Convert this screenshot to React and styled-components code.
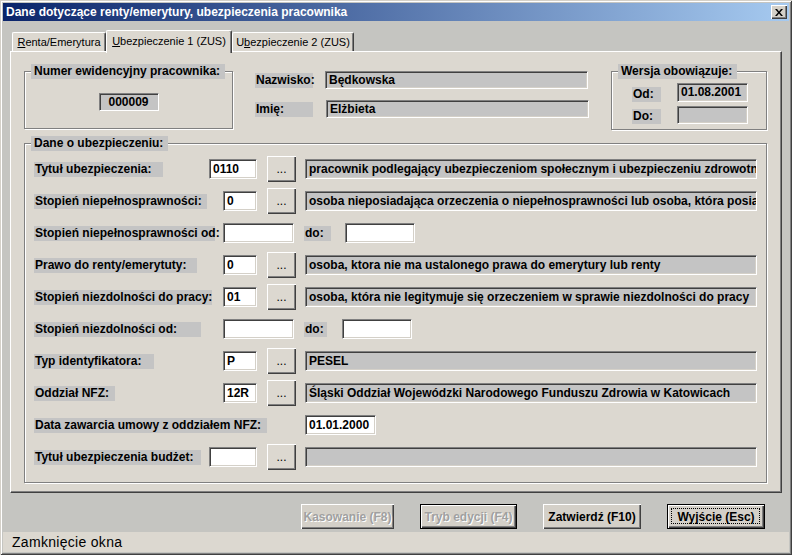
import React from 'react'
import styled, { createGlobalStyle } from 'styled-components'

const GlobalStyle = createGlobalStyle`
  html, body { margin: 0; padding: 0; background: #c5c5c1; }
  body { font-family: "Liberation Sans", Arial, sans-serif; color: #000; }
  * { box-sizing: border-box; }
`

const Window = styled.div`
  width: 792px;
  height: 555px;
  padding: 3px;
  display: flex;
  flex-direction: column;
  background: #c5c5c1;
  box-shadow: inset 1px 1px 0 #d4d0c8, inset -1px -1px 0 #404040,
    inset 2px 2px 0 #fff, inset -2px -2px 0 #808080;
`

const TitleBar = styled.div`
  height: 18px;
  display: flex;
  align-items: center;
  justify-content: space-between;
  padding: 0 2px 0 3px;
  background: linear-gradient(to right, #0a246a, #a6caf0);
`

const TitleText = styled.span`
  color: #fff;
  font-weight: bold;
  font-size: 12px;
  white-space: nowrap;
`

const CloseButton = styled.div`
  width: 16px;
  height: 14px;
  display: flex;
  align-items: center;
  justify-content: center;
  background: #d4d0c8;
  box-shadow: inset 1px 1px 0 #fff, inset -1px -1px 0 #404040, inset -2px -2px 0 #808080;
`

const Body = styled.div`
  display: flex;
  flex-direction: column;
  padding: 9px 7px 0;
`

const TabStrip = styled.div`
  height: 21px;
  display: flex;
  align-items: flex-end;
  padding-left: 2px;
  position: relative;
  z-index: 1;
`

const Tab = styled.div`
  width: ${p => p.$w}px;
  height: ${p => (p.$active ? 23 : 19)}px;
  margin-bottom: ${p => (p.$active ? -2 : 0)}px;
  display: flex;
  align-items: center;
  justify-content: center;
  padding-bottom: ${p => (p.$active ? 2 : 0)}px;
  font-size: 11px;
  background: #dcd8d0;
  border-top: 1px solid #fff;
  border-left: 1px solid #fff;
  border-right: 1px solid #404040;
  border-radius: 2px 2px 0 0;
  box-shadow: inset -1px 0 0 #808080;
  white-space: nowrap;
  u { text-decoration: underline; }
`

const Panel = styled.div`
  height: 442px;
  padding: 19px 14px 0 13px;
  background: #dcd8d0;
  border-top: 1px solid #fff;
  border-left: 1px solid #fff;
  border-right: 1px solid #404040;
  border-bottom: 1px solid #404040;
  box-shadow: inset -1px -1px 0 #808080;
`

const TopSection = styled.div`
  height: 59px;
  display: flex;
  align-items: flex-start;
  margin-bottom: 13px;
`

const GroupBox = styled.div`
  width: ${p => (p.$w ? `${p.$w}px` : 'auto')};
  height: ${p => (p.$h ? `${p.$h}px` : 'auto')};
  display: flex;
  flex-direction: column;
  border: 1px solid #808080;
  box-shadow: inset 1px 1px 0 #fff, 1px 1px 0 #fff;
`

const GroupTitle = styled.div`
  align-self: flex-start;
  margin: -8px 0 ${p => -7 + (p.$after || 0)}px ${p => p.$left}px;
  padding: 0 5px 0 3px;
  height: 15px;
  line-height: 15px;
  font-size: 12px;
  font-weight: bold;
  background: #c4c4c4;
  white-space: nowrap;
`

const NumberGroup = styled(GroupBox)`
  align-items: center;
`

const NumberValue = styled.div`
  width: 60px;
  height: 18px;
  display: flex;
  align-items: center;
  justify-content: center;
  font-size: 12px;
  font-weight: bold;
  background: #c4c4c4;
  border: 1px solid;
  border-color: #808080 #fff #fff #808080;
  box-shadow: inset 1px 1px 0 #404040;
`

const NameBlock = styled.div`
  margin-left: 22px;
  display: flex;
  flex-direction: column;
  gap: 11px;
`

const NameRow = styled.div`
  height: 18px;
  display: flex;
  align-items: center;
`

const SideLabel = styled.div`
  width: ${p => p.$w}px;
  height: 15px;
  line-height: 15px;
  margin-right: ${p => p.$gap}px;
  padding-left: 1px;
  font-size: 12px;
  font-weight: bold;
  background: #c4c4c4;
  white-space: nowrap;
  flex-shrink: 0;
`

const Field = styled.div`
  width: ${p => (p.$w ? `${p.$w}px` : 'auto')};
  flex: ${p => (p.$w ? '0 0 auto' : '1 1 0')};
  min-width: 0;
  height: ${p => p.$h || 20}px;
  line-height: ${p => (p.$h || 20) - 2}px;
  padding-left: 3px;
  font-size: 12px;
  font-weight: bold;
  white-space: nowrap;
  overflow: hidden;
  background: ${p => (p.$white ? '#fff' : '#c4c4c4')};
  border: 1px solid;
  border-color: #808080 #fff #fff #808080;
  box-shadow: inset 1px 1px 0 #404040, inset -1px -1px 0 #d4d0c8;
`

const VersionGroup = styled(GroupBox)`
  margin-left: auto;
  padding-left: 20px;
`

const VersionRows = styled.div`
  display: flex;
  flex-direction: column;
  gap: 4px;
`

const VersionRow = styled.div`
  display: flex;
  align-items: flex-end;
`

const DataGroup = styled(GroupBox)`
  padding: 0 9px 9px 9px;
`

const Row = styled.div`
  height: 32px;
  display: flex;
  align-items: center;
`

const LabelCell = styled.div`
  width: ${p => p.$w}px;
  margin-left: ${p => p.$offset || 0}px;
  flex-shrink: 0;
`

const FieldLabel = styled.div`
  width: ${p => p.$w}px;
  height: 15px;
  line-height: 15px;
  padding-left: 1px;
  font-size: 12px;
  font-weight: bold;
  background: #c4c4c4;
  white-space: nowrap;
`

const DotsButton = styled.div`
  width: 29px;
  height: 26px;
  margin: 0 9px 0 10px;
  flex-shrink: 0;
  display: flex;
  align-items: flex-end;
  justify-content: center;
  padding-bottom: 7px;
  font-size: 12px;
  line-height: 1;
  background: #dcd8d0;
  box-shadow: inset 1px 1px 0 #fff, inset -1px -1px 0 #404040, inset -2px -2px 0 #808080;
`

const ButtonBar = styled.div`
  height: 39px;
  display: flex;
  justify-content: flex-end;
  align-items: flex-start;
  gap: 26px;
  padding: 11px 17px 0 0;
`

const WinButton = styled.div`
  position: relative;
  width: ${p => p.$w}px;
  height: 25px;
  display: flex;
  align-items: center;
  justify-content: center;
  font-size: 12px;
  font-weight: bold;
  white-space: nowrap;
  background: #d4d0c8;
  color: ${p => (p.$disabled ? '#a0a0a0' : '#000')};
  text-shadow: ${p => (p.$disabled ? '1px 1px 0 #fff' : 'none')};
  border: ${p => (p.$default ? '1px solid #000' : 'none')};
  box-shadow: inset 1px 1px 0 #fff, inset -1px -1px 0 #404040, inset -2px -2px 0 #808080;
  &::after {
    content: '';
    display: ${p => (p.$focused ? 'block' : 'none')};
    position: absolute;
    inset: 3px 4px 4px 3px;
    border: 1px dotted #000;
  }
`

const StatusBar = styled.div`
  height: 20px;
  display: flex;
  align-items: center;
  padding-left: 9px;
  font-size: 14px;
  letter-spacing: 0.3px;
  background: #dcd8d0;
`

const LookupRow = ({ label, labelW, cell, code, codeW, desc }) => (
  <Row>
    <LabelCell $w={cell}>
      <FieldLabel $w={labelW}>{label}</FieldLabel>
    </LabelCell>
    <Field $white $w={codeW}>{code}</Field>
    <DotsButton>...</DotsButton>
    <Field>{desc}</Field>
  </Row>
)

const RangeRow = ({ label, labelW, doCell, doW }) => (
  <Row>
    <LabelCell $w={189}>
      <FieldLabel $w={labelW}>{label}</FieldLabel>
    </LabelCell>
    <Field $white $w={71} />
    <LabelCell $w={doCell} $offset={10}>
      <FieldLabel $w={doW}>do:</FieldLabel>
    </LabelCell>
    <Field $white $w={70} />
  </Row>
)

export default function App() {
  return (
    <>
      <GlobalStyle />
      <Window>
        <TitleBar>
          <TitleText>Dane dotyczące renty/emerytury, ubezpieczenia pracownika</TitleText>
          <CloseButton>
            <svg width="8" height="7" viewBox="0 0 8 7">
              <path d="M0 0h2l2 2.5L6 0h2L5 3.5 8 7H6L4 4.5 2 7H0l3-3.5z" fill="#000" />
            </svg>
          </CloseButton>
        </TitleBar>
        <Body>
          <TabStrip>
            <Tab $w={94}><span><u>R</u>enta/Emerytura</span></Tab>
            <Tab $w={126} $active><span><u>U</u>bezpieczenie 1 (ZUS)</span></Tab>
            <Tab $w={122}><span>U<u>b</u>ezpieczenie 2 (ZUS)</span></Tab>
          </TabStrip>
          <Panel>
            <TopSection>
              <NumberGroup $w={209} $h={58}>
                <GroupTitle $left={6} $after={21}>Numer ewidencyjny pracownika:</GroupTitle>
                <NumberValue>000009</NumberValue>
              </NumberGroup>
              <NameBlock>
                <NameRow>
                  <SideLabel $w={58} $gap={12}>Nazwisko:</SideLabel>
                  <Field $w={263} $h={18}>Będkowska</Field>
                </NameRow>
                <NameRow>
                  <SideLabel $w={58} $gap={13}>Imię:</SideLabel>
                  <Field $w={263} $h={18}>Elżbieta</Field>
                </NameRow>
              </NameBlock>
              <VersionGroup $w={156} $h={59}>
                <GroupTitle $left={-14} $after={11}>Wersja obowiązuje:</GroupTitle>
                <VersionRows>
                  <VersionRow>
                    <SideLabel $w={29} $gap={16}>Od:</SideLabel>
                    <Field $w={71} $h={19}>01.08.2001</Field>
                  </VersionRow>
                  <VersionRow>
                    <SideLabel $w={29} $gap={16}>Do:</SideLabel>
                    <Field $w={71} $h={18} />
                  </VersionRow>
                </VersionRows>
              </VersionGroup>
            </TopSection>
            <DataGroup>
              <GroupTitle $left={-3} $after={9}>Dane o ubezpieczeniu:</GroupTitle>
              <LookupRow
                label="Tytuł ubezpieczenia:"
                labelW={129}
                cell={175}
                code="0110"
                codeW={48}
                desc="pracownik podlegający ubezpieczeniom społecznym i ubezpieczeniu zdrowotnemu"
              />
              <LookupRow
                label="Stopień niepełnosprawności:"
                labelW={173}
                cell={189}
                code="0"
                codeW={34}
                desc="osoba nieposiadająca orzeczenia o niepełnosprawności lub osoba, która posiadała orzeczenie"
              />
              <RangeRow label="Stopień niepełnosprawności od:" labelW={181} doCell={41} doW={27} />
              <LookupRow
                label="Prawo do renty/emerytuty:"
                labelW={163}
                cell={189}
                code="0"
                codeW={34}
                desc="osoba, ktora nie ma ustalonego prawa do emerytury lub renty"
              />
              <LookupRow
                label="Stopień niezdolności do pracy:"
                labelW={178}
                cell={189}
                code="01"
                codeW={34}
                desc="osoba, która nie legitymuje się orzeczeniem w sprawie niezdolności do pracy"
              />
              <RangeRow label="Stopień niezdolności od:" labelW={167} doCell={38} doW={23} />
              <LookupRow
                label="Typ identyfikatora:"
                labelW={120}
                cell={189}
                code="P"
                codeW={34}
                desc="PESEL"
              />
              <LookupRow
                label="Oddział NFZ:"
                labelW={81}
                cell={189}
                code="12R"
                codeW={34}
                desc="Śląski Oddział Wojewódzki Narodowego Funduszu Zdrowia w Katowicach"
              />
              <Row>
                <LabelCell $w={271}>
                  <FieldLabel $w={233}>Data zawarcia umowy z oddziałem NFZ:</FieldLabel>
                </LabelCell>
                <Field $white $w={71}>01.01.2000</Field>
              </Row>
              <LookupRow
                label="Tytuł ubezpieczenia budżet:"
                labelW={167}
                cell={175}
                code=""
                codeW={48}
                desc=""
              />
            </DataGroup>
          </Panel>
          <ButtonBar>
            <WinButton $w={93} $disabled>Kasowanie (F8)</WinButton>
            <WinButton $w={97} $disabled $default>Tryb edycji (F4)</WinButton>
            <WinButton $w={98}>Zatwierdź (F10)</WinButton>
            <WinButton $w={98} $default $focused>Wyjście (Esc)</WinButton>
          </ButtonBar>
        </Body>
        <StatusBar>Zamknięcie okna</StatusBar>
      </Window>
    </>
  )
}
